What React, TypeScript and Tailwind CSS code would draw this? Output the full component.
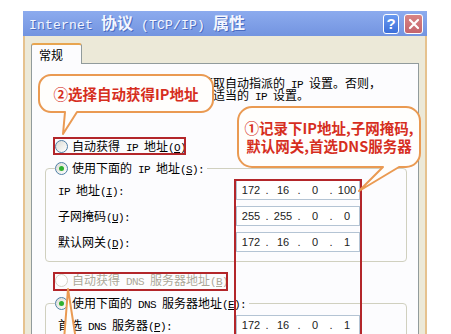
import React, { Fragment } from "react";

const MONO = "font-['Liberation_Mono',monospace] text-[11px] tracking-[-0.6px] whitespace-pre";

function T({ s, mono = MONO }: { s: string; mono?: string }) {
  const parts = s.split(/([\x20-\x7e]+)/).filter(Boolean);
  return (
    <>
      {parts.map((p, i) =>
        /^[\x20-\x7e]+$/.test(p) ? (
          <span key={i} className={mono}>
            {p}
          </span>
        ) : (
          <span key={i}>{p}</span>
        )
      )}
    </>
  );
}

function L({ a, k, b }: { a: string; k: string; b: string }) {
  return (
    <span className="block h-[12px] leading-[12px] whitespace-nowrap">
      <T s={a} />
      <span className={MONO + " underline underline-offset-1"}>{k}</span>
      <T s={b} />
    </span>
  );
}

function Radio({ checked, disabled }: { checked?: boolean; disabled?: boolean }) {
  return (
    <span
      className={`inline-flex w-[13px] h-[13px] rounded-full border items-center justify-center shrink-0 ${
        disabled ? "border-[#d4d2c6] bg-white" : "border-[#4f7fa6] bg-linear-to-br from-[#dcdcd5] to-white"
      }`}
    >
      {checked && <span className="w-[5px] h-[5px] rounded-full bg-[#2fb02f]" />}
    </span>
  );
}

function IpField({ v }: { v: string[] }) {
  return (
    <div className="w-[124px] h-[20px] border border-[#b4c4d4] bg-white flex items-center pl-[2px] font-['Liberation_Sans',sans-serif] text-[11px] text-[#222]">
      {v.map((o, i) => (
        <Fragment key={i}>
          {i > 0 && <span className="w-[8px] text-center">.</span>}
          <span className="w-[24px] text-center">{o}</span>
        </Fragment>
      ))}
    </div>
  );
}

function bubblePath(x: number, y: number, w: number, h: number, r: number, t1: number, t2: number, tx: number, ty: number) {
  return `M${x + r},${y} H${x + w - r} A${r},${r} 0 0 1 ${x + w},${y + r} V${y + h - r} A${r},${r} 0 0 1 ${x + w - r},${y + h} H${t2} L${tx},${ty} L${t1},${y + h} H${x + r} A${r},${r} 0 0 1 ${x},${y + h - r} V${y + r} A${r},${r} 0 0 1 ${x + r},${y} Z`;
}

export default function App() {
  return (
    <div className="relative w-[451px] h-[334px] overflow-hidden bg-white pl-[23px] pt-[11px] font-['Noto_Sans_CJK_SC',sans-serif] text-[12px] leading-[12px] text-black">
      <div className="w-[404px] h-[400px] flex flex-col">
        {/* Title bar */}
        <div className="h-[25px] shrink-0 flex items-center justify-between pl-[6px] pr-[4px] bg-linear-to-b from-[#8cabee] to-[#7394e0]">
          <div className="text-[16px] leading-[16px] font-bold text-[#f4f7ff] whitespace-nowrap [text-shadow:1px_1px_0_#4a6cc0]">
            <T s="Internet 协议 (TCP/IP) 属性" mono="font-['Liberation_Mono',monospace] font-normal text-[13px] tracking-[0.2px] whitespace-pre" />
          </div>
          <div className="flex items-center gap-[5px]">
            <div className="w-[16px] h-[20px] rounded-[3px] border border-white bg-linear-to-b from-[#6b9af0] to-[#3c6fd9] flex items-center justify-center text-white font-bold text-[15px] font-['Liberation_Sans',sans-serif]">
              ?
            </div>
            <div className="w-[19px] h-[20px] rounded-[3px] border border-white bg-linear-to-b from-[#d98484] to-[#c4646c] flex items-center justify-center">
              <svg width="12" height="12" viewBox="0 0 12 12">
                <path d="M2 2 L10 10 M10 2 L2 10" stroke="white" strokeWidth="2.2" strokeLinecap="round" />
              </svg>
            </div>
          </div>
        </div>
        {/* Body */}
        <div className="flex-1 bg-[#ece9d8] border-x-2 border-[#e6c28e] pt-[7px] px-[6px] flex flex-col">
          <div className="relative z-10 -mb-px w-[51px] h-[21px] bg-[#fcfcfe] border border-b-0 border-[#919b9c] border-t-[#e8a550] border-t-2 rounded-t-[3px] pl-[7px] flex items-center">
            常规
          </div>
          <div className="flex-1 border border-[#919b9c] bg-[#fcfcfe] flex flex-col">
            <div className="ml-[13px] mt-[13px] whitespace-nowrap">
              <div className="h-[12px]">
                <T s="如果网络支持此功能，则可以获取自动指派的 IP 设置。否则，" />
              </div>
              <div className="h-[12px]">
                <T s="您需要从网络系统管理员处获得适当的 IP 设置。" />
              </div>
            </div>
            <div className="ml-[23px] mt-[36px] h-[18px] flex items-center gap-[4px]">
              <Radio />
              <L a="自动获得 IP 地址(" k="O" b=")" />
            </div>
            <fieldset className="ml-[13px] mt-[4px] w-[362px] border border-[#d0d0bf] rounded-[4px] pb-[9px]">
              <legend className="ml-[9px] pr-[3px] h-[18px] flex items-center gap-[4px]">
                <Radio checked />
                <L a="使用下面的 IP 地址(" k="S" b="):" />
              </legend>
              <div className="mt-[3px] flex flex-col gap-[6px]">
                <div className="h-[20px] flex items-center">
                  <div className="w-[190px] pl-[12px]">
                    <L a="IP 地址(" k="I" b="):" />
                  </div>
                  <IpField v={["172", "16", "0", "100"]} />
                </div>
                <div className="h-[20px] flex items-center">
                  <div className="w-[190px] pl-[12px]">
                    <L a="子网掩码(" k="U" b="):" />
                  </div>
                  <IpField v={["255", "255", "0", "0"]} />
                </div>
                <div className="h-[20px] flex items-center">
                  <div className="w-[190px] pl-[12px]">
                    <L a="默认网关(" k="D" b="):" />
                  </div>
                  <IpField v={["172", "16", "0", "1"]} />
                </div>
              </div>
            </fieldset>
            <div className="ml-[23px] mt-[9px] h-[18px] flex items-center gap-[4px] text-[#aca899] [text-shadow:1px_1px_0_#ffffff]">
              <Radio disabled />
              <L a="自动获得 DNS 服务器地址(" k="B" b=")" />
            </div>
            <fieldset className="ml-[13px] mt-[5px] w-[362px] border border-[#d0d0bf] rounded-[4px] pb-[9px]">
              <legend className="ml-[9px] pr-[3px] h-[18px] flex items-center gap-[4px]">
                <Radio checked />
                <L a="使用下面的 DNS 服务器地址(" k="E" b="):" />
              </legend>
              <div className="mt-[3px] flex flex-col gap-[6px]">
                <div className="h-[20px] flex items-center">
                  <div className="w-[190px] pl-[12px]">
                    <L a="首选 DNS 服务器(" k="P" b="):" />
                  </div>
                  <IpField v={["172", "16", "0", "1"]} />
                </div>
              </div>
            </fieldset>
          </div>
        </div>
      </div>

      {/* Annotation overlay */}
      <svg className="absolute left-0 top-0 pointer-events-none" width="451" height="334" viewBox="0 0 451 334">
        <rect x="54" y="138" width="131" height="16" fill="none" stroke="#b3262a" strokeWidth="2" />
        <rect x="54" y="273" width="173" height="17" fill="none" stroke="#b3262a" strokeWidth="2" />
        <rect x="235" y="180" width="126" height="200" fill="none" stroke="#b3262a" strokeWidth="2" />
        <path d={bubblePath(39, 75, 174, 37, 12, 65, 77, 63, 134)} fill="#fffefc" stroke="#ea9a52" strokeWidth="2" strokeLinejoin="round" />
        <path d={bubblePath(238, 107, 182, 60, 14, 383, 399, 359, 191)} fill="#fffefc" stroke="#ea9a52" strokeWidth="2" strokeLinejoin="round" />
        <path d="M64,340 L68,289 L76,340 Z" fill="#fffefc" stroke="#ea9a52" strokeWidth="2" strokeLinejoin="round" />
      </svg>
      <div className="absolute left-[39px] top-[75px] w-[174px] h-[37px] flex items-center justify-center text-[14.5px] leading-[18px] font-bold text-[#d62e1e] whitespace-nowrap">
        ②选择自动获得IP地址
      </div>
      <div className="absolute left-[238px] top-[107px] w-[182px] h-[60px] flex flex-col items-center justify-center text-[14.5px] leading-[18px] font-bold text-[#d62e1e] whitespace-nowrap">
        <div>①记录下IP地址,子网掩码,</div>
        <div>默认网关,首选DNS服务器</div>
      </div>
    </div>
  );
}
